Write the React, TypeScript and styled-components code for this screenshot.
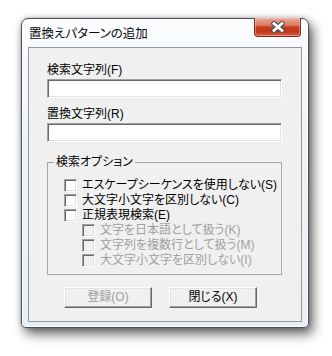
import React from "react";
import styled, { createGlobalStyle } from "styled-components";

const GlobalStyle = createGlobalStyle`
  html, body {
    margin: 0;
    padding: 0;
    background: #ffffff;
  }
  body {
    font-family: "Liberation Sans", "Noto Sans CJK JP", sans-serif;
    font-size: 12px;
    font-feature-settings: "palt";
    color: #000;
  }
`;

const Page = styled.div`
  width: 332px;
  height: 356px;
  padding: 18px 0 0 21px;
  box-sizing: border-box;
`;

const Frame = styled.div`
  width: 288px;
  height: 310px;
  box-sizing: border-box;
  display: flex;
  flex-direction: column;
  padding: 0 6px 5px;
  border: 1px solid #4a4f55;
  border-radius: 7px 7px 5px 5px;
  background: linear-gradient(180deg, #fbfcfe 0%, #eef3f9 40%, #e8eff7 100%);
  box-shadow: inset 0 0 0 1px rgba(255, 255, 255, 0.85),
    4px 6px 12px rgba(0, 0, 0, 0.6), 0 0 5px rgba(0, 0, 0, 0.25);
`;

const TitleBar = styled.div`
  height: 28px;
  display: flex;
  align-items: center;
  justify-content: space-between;
  padding-left: 1px;
`;

const Title = styled.span`
  font-size: 12.5px;
  line-height: 16px;
  color: #0a0a0a;
  margin-top: 1px;
`;

const CloseButton = styled.div`
  align-self: flex-start;
  width: 47px;
  height: 19px;
  margin-top: -1px;
  margin-right: 1px;
  box-sizing: border-box;
  display: flex;
  align-items: center;
  justify-content: center;
  border: 1px solid #7d2e1f;
  border-top: none;
  border-radius: 0 0 4px 4px;
  background: linear-gradient(
    180deg,
    #e8a897 0%,
    #db7c63 40%,
    #c7401f 50%,
    #c2361a 75%,
    #da6445 100%
  );
  box-shadow: inset 0 0 0 1px rgba(255, 220, 210, 0.4);
`;

const Client = styled.div`
  flex: 1;
  background: #f0f0f0;
  border: 1px solid #8f9aa6;
  padding: 14px 19px 0 18px;
  display: flex;
  flex-direction: column;
`;

const Label = styled.div<{ $gap?: number }>`
  line-height: 16px;
  height: 16px;
  margin-top: ${(p) => p.$gap ?? 0}px;
`;

const TextBox = styled.input`
  display: block;
  width: 235px;
  height: 19px;
  margin: 1px 0 0;
  box-sizing: border-box;
  background: #fff;
  border: 1px solid;
  border-color: #a0a0a0 #ffffff #ffffff #a0a0a0;
  box-shadow: inset 1px 1px 0 #696969, inset -1px -1px 0 #e3e3e3;
  outline: none;
  padding: 0 3px;
  font: inherit;
`;

const Group = styled.fieldset`
  width: 235px;
  box-sizing: border-box;
  margin: 12px 0 0;
  padding: 0;
  min-inline-size: 0;
  border: 1px solid #a7a7a7;
`;

const Legend = styled.legend`
  margin-left: 6px;
  padding: 0 2px;
  line-height: 16px;
`;

const Options = styled.div`
  padding: 8px 0 6px 16px;
  display: flex;
  flex-direction: column;
`;

const Option = styled.label<{ $indent?: boolean; $disabled?: boolean }>`
  display: flex;
  align-items: center;
  gap: 5px;
  height: 15px;
  line-height: 15px;
  padding-left: ${(p) => (p.$indent ? 18 : 0)}px;
  color: ${(p) => (p.$disabled ? "#a0a0a0" : "#000")};
  white-space: nowrap;
`;

const Box = styled.span<{ $disabled?: boolean }>`
  width: 13px;
  height: 13px;
  flex: none;
  box-sizing: border-box;
  border: 1px solid;
  border-color: #a0a0a0 #ffffff #ffffff #a0a0a0;
  box-shadow: inset 1px 1px 0 #696969, inset -1px -1px 0 #e3e3e3;
  background: ${(p) => (p.$disabled ? "#f0f0f0" : "#ffffff")};
`;

const Buttons = styled.div`
  display: flex;
  gap: 17px;
  margin: 12px 0 0 17px;
`;

const Button = styled.button<{ $disabled?: boolean }>`
  width: 88px;
  height: 21px;
  box-sizing: border-box;
  padding: 0;
  font: inherit;
  line-height: 17px;
  color: ${(p) => (p.$disabled ? "#a0a0a0" : "#000")};
  background: #f0f0f0;
  border: 1px solid;
  border-color: #ffffff #696969 #696969 #ffffff;
  box-shadow: inset -1px -1px 0 #a0a0a0, inset 1px 1px 0 #e3e3e3;
`;

function CloseGlyph() {
  return (
    <svg width="14" height="12" viewBox="0 0 14 12">
      <path
        d="M3 2.5 L11 9.5 M11 2.5 L3 9.5"
        stroke="#4b4b52"
        strokeWidth="5"
        strokeLinecap="square"
        fill="none"
      />
      <path
        d="M3 2.5 L11 9.5 M11 2.5 L3 9.5"
        stroke="#ffffff"
        strokeWidth="2.8"
        strokeLinecap="square"
        fill="none"
      />
    </svg>
  );
}

const mainOptions = [
  "エスケープシーケンスを使用しない(S)",
  "大文字小文字を区別しない(C)",
  "正規表現検索(E)",
];

const subOptions = [
  "文字を日本語として扱う(K)",
  "文字列を複数行として扱う(M)",
  "大文字小文字を区別しない(I)",
];

export default function App() {
  return (
    <Page>
      <GlobalStyle />
      <Frame>
        <TitleBar>
          <Title>置換えパターンの追加</Title>
          <CloseButton>
            <CloseGlyph />
          </CloseButton>
        </TitleBar>
        <Client>
          <Label>検索文字列(F)</Label>
          <TextBox />
          <Label $gap={8}>置換文字列(R)</Label>
          <TextBox />
          <Group>
            <Legend>検索オプション</Legend>
            <Options>
              {mainOptions.map((text) => (
                <Option key={text}>
                  <Box />
                  {text}
                </Option>
              ))}
              {subOptions.map((text) => (
                <Option key={text} $indent $disabled>
                  <Box $disabled />
                  {text}
                </Option>
              ))}
            </Options>
          </Group>
          <Buttons>
            <Button $disabled>登録(O)</Button>
            <Button>閉じる(X)</Button>
          </Buttons>
        </Client>
      </Frame>
    </Page>
  );
}
